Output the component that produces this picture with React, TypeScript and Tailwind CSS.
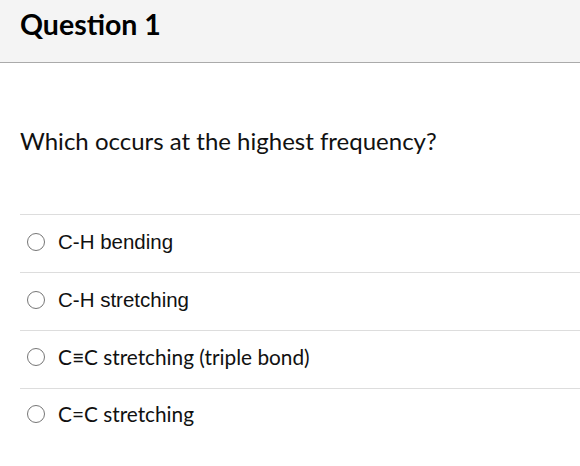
import React from 'react';

const options: { label: string; font: string }[] = [
  { label: 'C-H bending', font: 'arial' },
  { label: 'C-H stretching', font: 'arial' },
  { label: 'C≡C stretching (triple bond)', font: 'lato' },
  { label: 'C=C stretching', font: 'lato' },
];

const Radio: React.FC = () => (
  <span className="inline-block h-[18px] w-[18px] shrink-0 rounded-full border-[1.5px] border-[#767676] bg-white" />
);

export default function App() {
  return (
    <div className="min-h-[466px] w-[580px] bg-white text-black">
      <div className="flex h-[63px] items-center border-b border-[#aaaaaa] bg-[#f4f4f4] px-5 pb-[14px]">
        <h1 className="font-['Lato',sans-serif] text-[28.5px] leading-none font-bold text-[#000]">Question 1</h1>
      </div>
      <div className="pl-5">
        <p className="pt-[64px] pb-[59px] font-['Lato',sans-serif] text-[24px] leading-[28px] text-[#111]">
          Which occurs at the highest frequency?
        </p>
        <div>
          {options.map((o, i) => (
            <div
              key={o.label}
              className={`flex items-center gap-[13px] border-t border-[#dddddd] pl-[7px] ${i === 3 ? 'h-[57px]' : 'h-[58px]'} ${o.font === 'arial' ? 'pb-[3px]' : 'pb-[6px]'}`}
            >
              <Radio />
              <span
                className={
                  o.font === 'arial'
                    ? "font-['Liberation_Sans',Arial,sans-serif] text-[20.5px] text-[#111]"
                    : "font-['Lato',sans-serif] text-[20.8px] text-[#111]"
                }
              >
                {o.label}
              </span>
            </div>
          ))}
        </div>
      </div>
    </div>
  );
}
